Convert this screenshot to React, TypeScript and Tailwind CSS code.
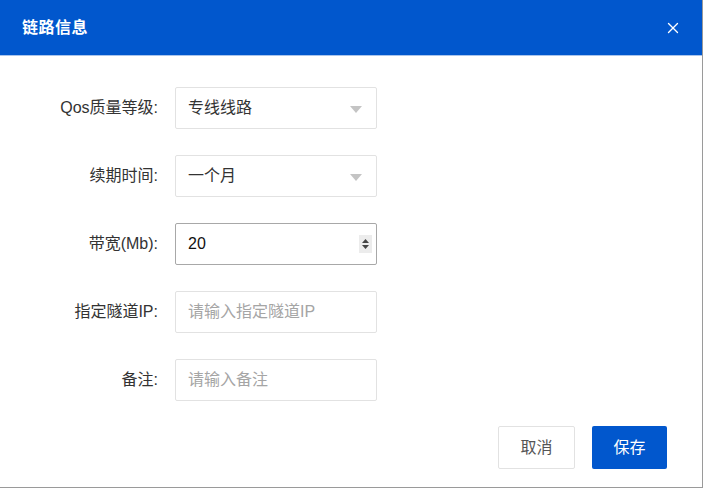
import { X } from 'lucide-react';

const font = { fontFamily: '"Liberation Sans", "Noto Sans CJK SC", sans-serif' };

function Caret() {
  return (
    <svg width="12" height="7" viewBox="0 0 12 7" className="absolute right-[14px] top-[18px]">
      <path d="M0 0 L12 0 L6 7 Z" fill="#c4c4c4" />
    </svg>
  );
}

function Row({ label, children }: { label: string; children: React.ReactNode }) {
  return (
    <div className="flex items-center">
      <div className="w-[158px] text-right text-[16px] text-[#333]">{label}</div>
      <div className="ml-[17px]">{children}</div>
    </div>
  );
}

export default function App() {
  return (
    <div className="w-[704px] h-[489px] bg-white" style={font}>
      <div className="w-[703px] h-[488px] border-r border-b border-[#9a9a9a] bg-white flex flex-col">
        <div className="h-[56px] bg-[#0157cd] flex items-center justify-between pl-[22px] pr-[20px] border-b border-[#a9c4ec]">
          <span className="text-white text-[16px] font-bold tracking-[0.5px]">链路信息</span>
          <X className="w-[18px] h-[18px] text-white" strokeWidth={1.8} />
        </div>
        <div className="flex flex-col gap-[26px] pt-[31px]">
          <Row label="Qos质量等级:">
            <div className="relative w-[202px] h-[42px] border border-[#e2e2e2] rounded-[2px] flex items-center pl-[12px] text-[16px] text-[#333]">
              专线线路
              <Caret />
            </div>
          </Row>
          <Row label="续期时间:">
            <div className="relative w-[202px] h-[42px] border border-[#e2e2e2] rounded-[2px] flex items-center pl-[12px] text-[16px] text-[#333]">
              一个月
              <Caret />
            </div>
          </Row>
          <Row label="带宽(Mb):">
            <div className="relative w-[202px] h-[42px] border border-[#a8a8a8] rounded-[2px] flex items-center pl-[12px] text-[16px] text-[#111]">
              20
              <div className="absolute right-[4px] top-[11px] w-[13px] h-[18px] bg-[#ececec] flex flex-col items-center justify-center gap-[2px]">
                <svg width="7" height="4" viewBox="0 0 7 4"><path d="M0 4 L7 4 L3.5 0 Z" fill="#444" /></svg>
                <svg width="7" height="4" viewBox="0 0 7 4"><path d="M0 0 L7 0 L3.5 4 Z" fill="#444" /></svg>
              </div>
            </div>
          </Row>
          <Row label="指定隧道IP:">
            <div className="w-[202px] h-[42px] border border-[#e2e2e2] rounded-[2px] flex items-center pl-[12px] text-[16px] text-[#a5a5a5]">
              请输入指定隧道IP
            </div>
          </Row>
          <Row label="备注:">
            <div className="w-[202px] h-[42px] border border-[#e2e2e2] rounded-[2px] flex items-center pl-[12px] text-[16px] text-[#a5a5a5]">
              请输入备注
            </div>
          </Row>
        </div>
        <div className="flex justify-end gap-[17px] pr-[35px] mt-[25px]">
          <button className="w-[77px] h-[43px] border border-[#e2e2e2] rounded-[2px] bg-white text-[16px] text-[#555]">
            取消
          </button>
          <button className="w-[75px] h-[43px] rounded-[2px] bg-[#0157cd] text-[16px] text-white">
            保存
          </button>
        </div>
      </div>
    </div>
  );
}
